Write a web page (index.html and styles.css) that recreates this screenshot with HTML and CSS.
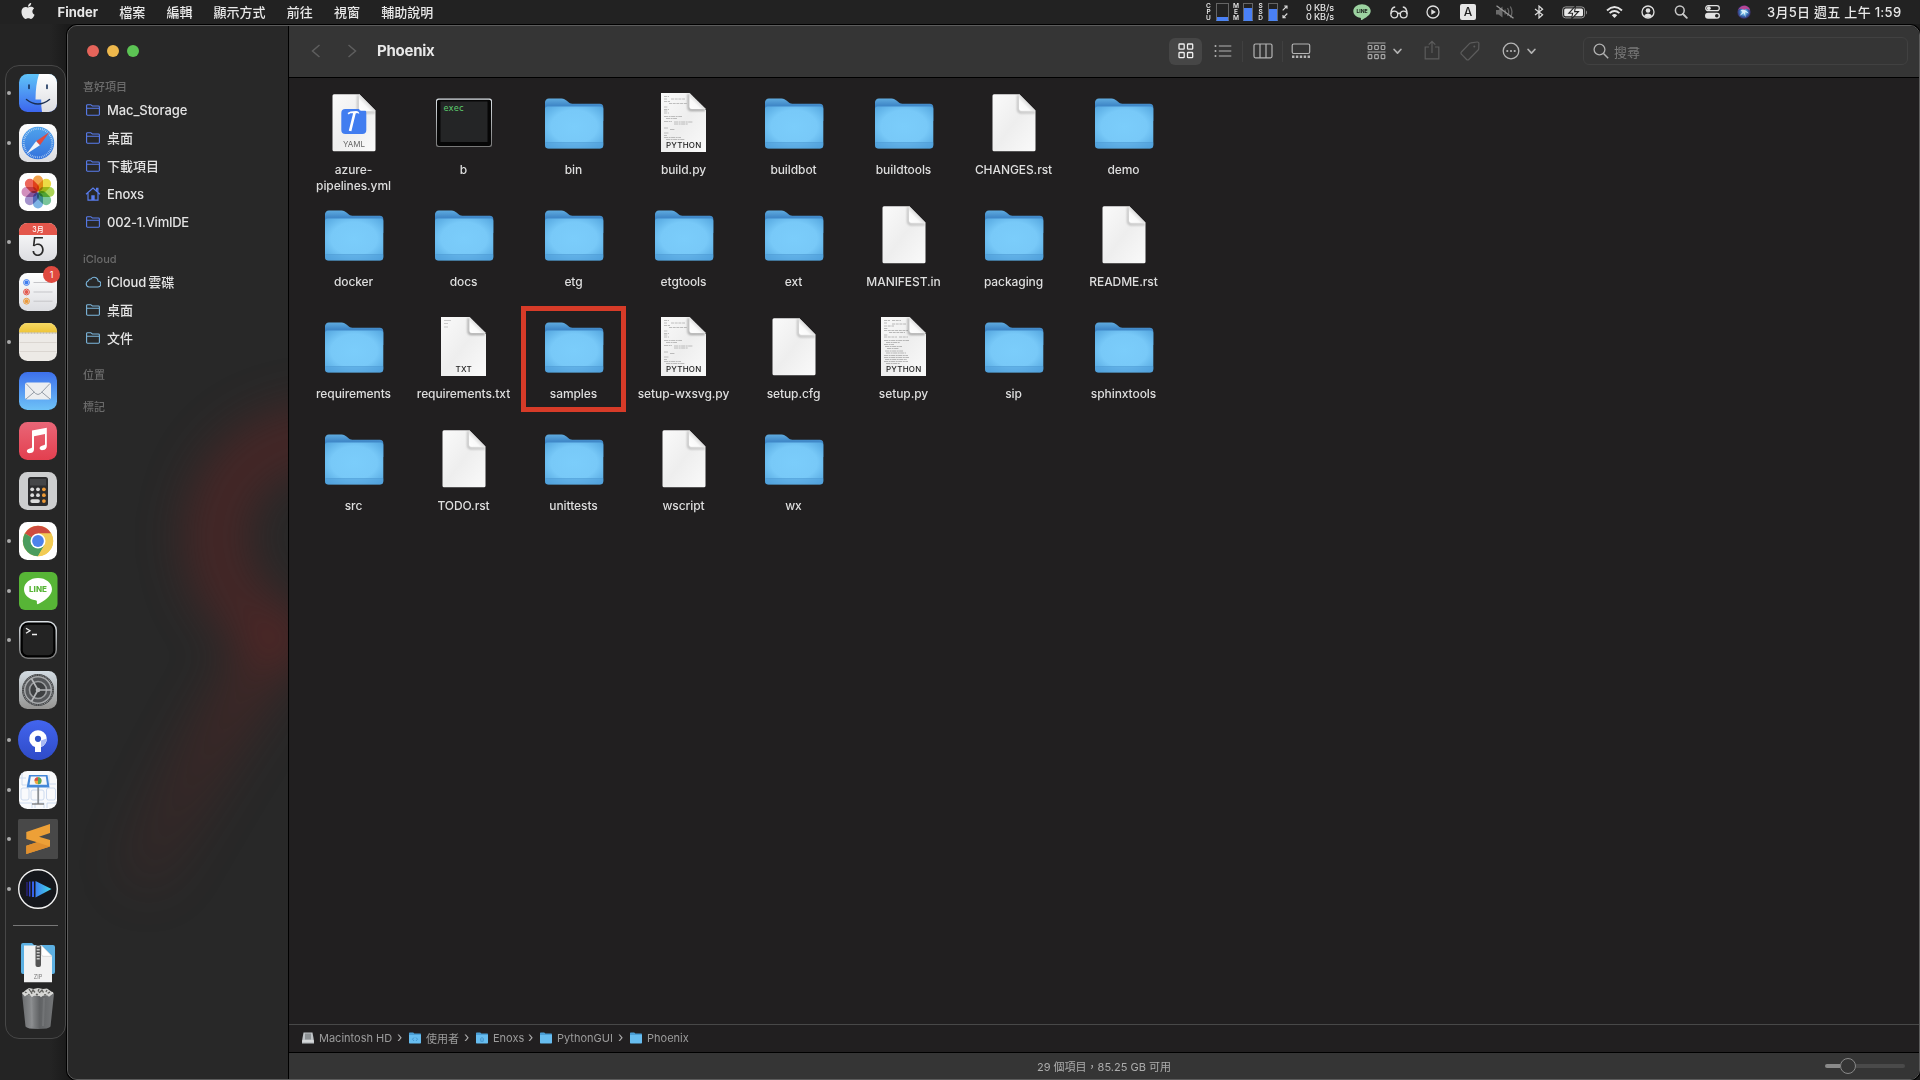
FILE: index.html
```html
<!DOCTYPE html>
<html lang="zh-Hant">
<head>
<meta charset="utf-8">
<title>Phoenix</title>
<link rel="stylesheet" href="styles.css">
</head>
<body>
<svg class="sprite" width="0" height="0" aria-hidden="true">
  <defs>
    <linearGradient id="gFolderBack" x1="0" y1="0" x2="0" y2="1"><stop offset="0" stop-color="#5fabdf"/><stop offset=".3" stop-color="#4088c8"/></linearGradient>
    <radialGradient id="gFolder" cx=".5" cy=".48" r=".72"><stop offset="0" stop-color="#7bcdfb"/><stop offset=".55" stop-color="#78c9f8"/><stop offset="1" stop-color="#50a2dc"/></radialGradient>
    <linearGradient id="gPage" x1="0" y1="0" x2="1" y2="1"><stop offset="0" stop-color="#fafafa"/><stop offset=".5" stop-color="#eeeeee"/><stop offset="1" stop-color="#fafafa"/></linearGradient>
    <linearGradient id="gCurl" x1="0" y1="1" x2=".55" y2=".45"><stop offset="0" stop-color="#fff"/><stop offset=".6" stop-color="#fafafa"/><stop offset="1" stop-color="#d4d4d4"/></linearGradient>
    <linearGradient id="gMetal" x1="0" y1="0" x2="0" y2="1"><stop offset="0" stop-color="#dde3e8"/><stop offset="1" stop-color="#777"/></linearGradient>
    <linearGradient id="gFinder" x1="0" y1="0" x2="0" y2="1"><stop offset="0" stop-color="#5fc4f8"/><stop offset="1" stop-color="#3c66ee"/></linearGradient>
    <linearGradient id="gWhite" x1="0" y1="0" x2="0" y2="1"><stop offset="0" stop-color="#fff"/><stop offset="1" stop-color="#dcdde1"/></linearGradient>
    <linearGradient id="gSafari" x1="0" y1="0" x2="0" y2="1"><stop offset="0" stop-color="#4fa3ec"/><stop offset="1" stop-color="#3573dc"/></linearGradient>
    <linearGradient id="gMail" x1="0" y1="0" x2="0" y2="1"><stop offset="0" stop-color="#3d70ec"/><stop offset="1" stop-color="#6ec2f7"/></linearGradient>
    <linearGradient id="gMusic" x1="0" y1="0" x2="0" y2="1"><stop offset="0" stop-color="#e96677"/><stop offset="1" stop-color="#e33f4f"/></linearGradient>
    <linearGradient id="gNote" x1="0" y1="0" x2="0" y2="1"><stop offset="0" stop-color="#f7da64"/><stop offset="1" stop-color="#eec437"/></linearGradient>
    <linearGradient id="gPlay" x1="0" y1="0" x2="1" y2="0"><stop offset="0" stop-color="#3d7ef0"/><stop offset="1" stop-color="#42dbe9"/></linearGradient>
    <linearGradient id="gSettings" x1="0" y1="0" x2="0" y2="1"><stop offset="0" stop-color="#d3dce3"/><stop offset="1" stop-color="#959492"/></linearGradient>
    <linearGradient id="gTrash" x1="0" y1="0" x2="1" y2="0"><stop offset="0" stop-color="#6a6c6e"/><stop offset=".3" stop-color="#898b8d"/><stop offset=".55" stop-color="#606264"/><stop offset="1" stop-color="#747678"/></linearGradient>
    <linearGradient id="gSource" x1="0" y1="0" x2="0" y2="1"><stop offset="0" stop-color="#4365ee"/><stop offset="1" stop-color="#2f4bc8"/></linearGradient>
    <radialGradient id="gSiri"><stop offset="0" stop-color="#bfe4f5"/><stop offset=".4" stop-color="#5fa8dc"/><stop offset=".7" stop-color="#3560a8"/><stop offset="1" stop-color="#3c2c62"/></radialGradient>
    <filter id="soft" x="-50%" y="-50%" width="200%" height="200%"><feGaussianBlur stdDeviation="1.2"/></filter>
  </defs>

  <symbol id="folder" viewBox="0 0 64 64">
    <path d="M3 12a4 4 0 0 1 4-4.500h12.500c2.500 0 3.800 1 5.300 2.300l1.500 1.300c1.200 1 2.200 1.700 4 1.700h27.500a3.500 3.500 0 0 1 3.500 3.500V30H3Z" fill="url(#gFolderBack)"/>
    <path d="M3 18a2.500 2.500 0 0 1 2.500-2.500h53.300a2.500 2.500 0 0 1 2.500 2.500v36a3.500 3.500 0 0 1-3.500 3.500H6.500A3.500 3.500 0 0 1 3 54Z" fill="url(#gFolder)"/>
    <path d="M3 51.500h58.300V54a3.500 3.500 0 0 1-3.500 3.500H6.500A3.500 3.500 0 0 1 3 54Z" fill="#4f9dd8" opacity=".55"/>
    <path d="M3.500 51.500h57.500" stroke="#4b97d0" stroke-width=".7" opacity=".7"/>
  </symbol>
  <symbol id="page" viewBox="0 0 64 64">
    <path d="M12 3.300h25.500l16 16.200v39.300a1.500 1.500 0 0 1-1.500 1.500H12a1.500 1.500 0 0 1-1.500-1.500v-54A1.500 1.500 0 0 1 12 3.300Z" fill="url(#gPage)"/>
    <path d="M36 4v14.500a3 3 0 0 0 3 3h14" fill="none" stroke="#777" stroke-width="1.500" opacity=".55" filter="url(#soft)"/>
    <path d="M37 3.300v14.200a2.300 2.300 0 0 0 2.300 2.300h14.200Z" fill="url(#gCurl)"/>
  </symbol>
  <symbol id="sheet" viewBox="0 0 64 64">
    <path d="M9 2h28.500L54 19v42H9Z" fill="url(#gPage)"/>
    <path d="M36.500 3v13.500a2.500 2.500 0 0 0 2.500 2.500h14" fill="none" stroke="#777" stroke-width="1.800" opacity=".7" filter="url(#soft)"/>
    <path d="M37.500 2v13.500a2.500 2.500 0 0 0 2.500 2.500h14Z" fill="url(#gCurl)"/>
  </symbol>
  <symbol id="python" viewBox="0 0 64 64">
    <use href="#sheet"/>
    <g stroke="#777" stroke-width=".8" opacity=".55" fill="none">
      <path d="M12 5.500h5M12 8h3M19 8h14M12 10.500h6M17 12.500h18M12 16h4M12 18.500h5M12 20h4M12 22h5" stroke-dasharray="3 .7"/>
      <path d="M12 25.500h18M14 27.500h11M12 30.500h8M22 31h19M22 33h14M12 37h4M18 38.500h5M12 42h5M12 44.500h3M12 46.500h17M14 48.500h19" stroke-dasharray="4 .6 2 .5"/>
    </g>
  </symbol>
  <symbol id="python-long" viewBox="0 0 64 64">
    <use href="#sheet"/>
    <g stroke="#777" stroke-width=".8" opacity=".6" fill="none">
      <path d="M12 5.500h6M20 5.500h9M12 8h3M20 9h14M12 11h10M12 13.500h4M12 15.500h24M17 17.500h16M12 20h4M12 22h13M27 22h9" stroke-dasharray="3 .7"/>
      <path d="M12 25.500h25M14 27.500h14M12 29.500h10M13 31.500h17M15 33.500h12M13 36h18M14 38h20M12 40.500h24M12 42.500h25M13 44.500h22M12 46.500h24M14 48.500h14" stroke-dasharray="4 .6 2 .5"/>
    </g>
  </symbol>

  <symbol id="side-folder" viewBox="0 0 16 14">
    <path d="M1.600 11.300V2.600a.9.900 0 0 1 .9-.9h3.300l1.500 1.300h6.200a.9.900 0 0 1 .9.900v7.400a.9.900 0 0 1-.9.900H2.500a.9.900 0 0 1-.9-.9ZM1.600 5.300h12.800" fill="none" stroke="currentColor" stroke-width="1.100"/>
  </symbol>
  <symbol id="side-home" viewBox="0 0 16 14">
    <path d="M1 7.300 8 1l7 6.300M3 6v7.200h10V6M11.600 3.500V1.300h1.300v3.500" fill="none" stroke="currentColor" stroke-width="1.200"/>
    <path d="M6.300 13V8.300h3.400V13Z" fill="currentColor"/>
  </symbol>
  <symbol id="side-cloud" viewBox="0 0 16 14">
    <path d="M4 12a3.200 3.200 0 0 1-.6-6.200A2.300 2.300 0 0 1 6 4a3.900 3.900 0 0 1 7.100 2A3 3 0 0 1 12.500 12Z" fill="none" stroke="currentColor" stroke-width="1.100"/>
  </symbol>
  <symbol id="mini-folder" viewBox="0 0 12 12">
    <path d="M0 1.500C0 .8.400.5 1 .5h3.200l1.200 1H11c.7 0 1 .3 1 1V5H0Z" fill="#4a9fd6"/>
    <path d="M0 3h12v7.500c0 .6-.4 1-1 1H1c-.6 0-1-.4-1-1Z" fill="#67bdf0"/>
  </symbol>
  <symbol id="chev-down" viewBox="0 0 8 6"><path d="M1 1.200 4 4.400l3-3.200" fill="none" stroke="currentColor" stroke-width="1.500" stroke-linecap="round" stroke-linejoin="round"/></symbol>
</svg>

<header class="menubar">
  <svg class="apple" viewBox="0 0 24 24"><path fill="#e6e6e6" d="M12.152 6.896c-.948 0-2.415-1.078-3.960-1.040-2.040.027-3.910 1.183-4.961 3.014-2.117 3.675-.546 9.103 1.519 12.090 1.013 1.454 2.208 3.090 3.792 3.039 1.520-.065 2.090-.987 3.935-.987 1.831 0 2.350.987 3.960.948 1.637-.026 2.676-1.480 3.676-2.948 1.156-1.688 1.636-3.325 1.662-3.415-.039-.013-3.182-1.221-3.220-4.857-.026-3.040 2.480-4.494 2.597-4.559-1.429-2.090-3.623-2.324-4.390-2.376-2-.156-3.675 1.090-4.610 1.090zM15.530 3.830c.843-1.012 1.400-2.427 1.245-3.830-1.207.052-2.662.805-3.532 1.818-.78.896-1.454 2.338-1.273 3.714 1.338.104 2.715-.688 3.559-1.701"/></svg>
  <nav class="menus">
    <span class="app-name">Finder</span><span>檔案</span><span>編輯</span><span>顯示方式</span><span>前往</span><span>視窗</span><span>輔助說明</span>
  </nav>
  <div class="status">
    <div class="meters">
      <span class="vert">C<br>P<br>U</span><span class="meter wide"><i class="lv-cpu"></i></span>
      <span class="vert">M<br>E<br>M</span><span class="meter"><i class="lv-mem"></i></span>
      <span class="vert">S<br>S<br>D</span><span class="meter"><i class="lv-ssd"></i></span>
      <svg class="updown" viewBox="0 0 6 14"><path d="M.7 5.300 5 1M2.200 1H5v2.800M5.300 8.500 1 12.800M1 10v2.800h2.800" fill="none" stroke="#ddd" stroke-width="1.100"/></svg>
    </div>
    <div class="net"><span>0 KB/s</span><span>0 KB/s</span></div>
    <svg class="si-line" viewBox="0 0 18 17"><path d="M9 .3C4.200.3.300 3.300.300 7.100c0 3.400 2.900 6.200 6.900 6.700.9.100.8.500.7 1.300-.1.900.2 1.200 1 .8 3.200-1.600 8.800-4.700 8.800-8.800C17.700 3.300 13.800.3 9 .3Z" fill="#9cd2a0"/><text x="9" y="9.200" class="line-sm">LINE</text></svg>
    <svg class="si-glass" viewBox="0 0 18 13"><g fill="none" stroke="#dcdcdc" stroke-width="1.300"><circle cx="4.300" cy="8.500" r="3.400"/><circle cx="13.700" cy="8.500" r="3.400"/><path d="M7.500 8c.7-1 2.300-1 3 0M1 8C1 4 2.500 1.200 5.200 1M17 8c0-4-1.500-6.800-4.200-7"/></g></svg>
    <svg class="si-play" viewBox="0 0 14 14"><circle cx="7" cy="7" r="6" fill="none" stroke="#e0e0e0" stroke-width="1.300"/><path d="M5.300 4.200v5.600L9.900 7Z" fill="#e0e0e0"/></svg>
    <span class="si-input">A</span>
    <svg class="si-mute" viewBox="0 0 20 14"><path d="M1 5h2.500L7.500 1.500v11L3.500 9.500H1Z" fill="#6b6b6b"/><path d="M9.800 4.500q1.500 2.500 0 5M12.500 3q2.500 4 0 8M15.300 1.500q3.300 5.500 0 11" fill="none" stroke="#666" stroke-width="1.300"/><path d="m1.500.8 17 12.400" stroke="#9a9a9a" stroke-width="1.300"/></svg>
    <svg class="si-bt" viewBox="0 0 10 14"><path d="m1 4 7.600 5.800L5 13V1l3.600 3.200L1 10" fill="none" stroke="#dedede" stroke-width="1.200"/></svg>
    <svg class="si-batt" viewBox="0 0 26 13"><rect x=".6" y=".9" width="22" height="11" rx="3" fill="none" stroke="#999" stroke-width="1"/><rect x="2.200" y="2.500" width="18.800" height="7.800" rx="1.500" fill="#e8e8e8"/><path d="M24 4.500c1.200.4 1.200 3.500 0 4Z" fill="#999"/><path d="M13.500 0 6.800 7.300h3.800L9.600 13l6.900-7.400h-3.900Z" fill="#e8e8e8" stroke="#222" stroke-width="1.100"/></svg>
    <svg class="si-wifi" viewBox="0 0 17 12"><g fill="none" stroke="#e4e4e4" stroke-width="1.900"><path d="M1 4.500q7.500-6.800 15 0M3.600 7.100q4.900-4.400 9.800 0"/></g><path d="M5.800 9.200q2.700-2.300 5.400 0L8.500 12Z" fill="#e4e4e4"/></svg>
    <svg class="si-user" viewBox="0 0 14 14"><circle cx="7" cy="7" r="6" fill="none" stroke="#e0e0e0" stroke-width="1.300"/><circle cx="7" cy="5.500" r="2.300" fill="#e0e0e0"/><path d="M3 11q1-2.600 4-2.600T11 11q-4 3-8 0Z" fill="#e0e0e0"/></svg>
    <svg class="si-find" viewBox="0 0 14 14"><circle cx="5.800" cy="5.500" r="4.400" fill="none" stroke="#c8c8c8" stroke-width="1.500"/><path d="m9 9 3.800 3.800" stroke="#c8c8c8" stroke-width="1.900" stroke-linecap="round"/></svg>
    <svg class="si-ctl" viewBox="0 0 15 14"><rect x=".7" y=".7" width="13.600" height="5" rx="2.500" fill="none" stroke="#e2e2e2" stroke-width="1.200"/><circle cx="3.800" cy="3.200" r="1.900" fill="#e2e2e2"/><rect y="7.700" width="15" height="6" rx="3" fill="#e2e2e2"/><circle cx="11.800" cy="10.700" r="1.800" fill="#222"/></svg>
    <svg class="si-siri" viewBox="0 0 14 14"><circle cx="7" cy="7" r="6.700" fill="url(#gSiri)"/><path d="M1 5Q4 0 8.500.8q4 1 4.500 4.700Q9.500 2.500 7 5 4 2.500 1 5Z" fill="#b84594"/><path d="M3.500 5.500Q7.500 3 12 8.500L8 7l.5 5.500L6.800 8 2.500 11 5.500 7Z" fill="#d9f0fa"/></svg>
    <span class="clock">3月5日 週五 上午 1:59</span>
  </div>
</header>

<div class="desktop">
  <aside class="dock">
    <div class="app running"><svg viewBox="0 0 40 40"><rect x="1" y="1" width="38" height="38" rx="8.500" fill="url(#gFinder)"/><path d="M21 1h9.500A8.500 8.500 0 0 1 39 9.500v21a8.500 8.500 0 0 1-8.500 8.500H24q-1-6-.8-12.500H17.500Q17.500 12 21 1Z" fill="url(#gWhite)"/><path d="M11 12v3.500M29 12v3.500" stroke="#15305a" stroke-width="1.600" stroke-linecap="round"/><path d="M8.500 26.500q11.500 9 23 0" fill="none" stroke="#1a2e50" stroke-width="1.500" stroke-linecap="round"/></svg></div>
    <div class="app running"><svg viewBox="0 0 40 40"><rect x="1" y="1" width="38" height="38" rx="8.500" fill="url(#gWhite)"/><circle cx="20" cy="20" r="16.200" fill="url(#gSafari)"/><circle cx="20" cy="20" r="14.300" fill="none" stroke="#cfe3f8" stroke-width="2" stroke-dasharray=".6 1.270"/><path d="m31.500 9-9.600 13.200-3.800-3.900Z" fill="#e04b3f"/><path d="M8.500 31 18.100 18.300l3.800 3.900Z" fill="#f2f4f7"/></svg></div>
    <div class="app"><svg viewBox="0 0 40 40"><rect x="1" y="1" width="38" height="38" rx="8.500" fill="#fff"/><g class="petals"><rect x="15" y="3.500" width="10" height="16" rx="5" fill="#f2a04a"/><rect x="15" y="3.500" width="10" height="16" rx="5" fill="#ecdb45" transform="rotate(45 20 20)"/><rect x="15" y="3.500" width="10" height="16" rx="5" fill="#aad356" transform="rotate(90 20 20)"/><rect x="15" y="3.500" width="10" height="16" rx="5" fill="#79c59a" transform="rotate(135 20 20)"/><rect x="15" y="3.500" width="10" height="16" rx="5" fill="#7db3e4" transform="rotate(180 20 20)"/><rect x="15" y="3.500" width="10" height="16" rx="5" fill="#a493cc" transform="rotate(225 20 20)"/><rect x="15" y="3.500" width="10" height="16" rx="5" fill="#d290bd" transform="rotate(270 20 20)"/><rect x="15" y="3.500" width="10" height="16" rx="5" fill="#ec665a" transform="rotate(315 20 20)"/></g></svg></div>
    <div class="app running"><svg viewBox="0 0 40 40"><rect x="1" y="1" width="38" height="38" rx="8.500" fill="url(#gWhite)"/><path d="M1 13V9.500A8.500 8.500 0 0 1 9.500 1h21A8.500 8.500 0 0 1 39 9.500V13Z" fill="#e3564b"/><text x="20" y="10" class="cal-month">3月</text><text x="20" y="33.500" class="cal-day">5</text></svg></div>
    <div class="app"><svg viewBox="0 0 40 40"><rect x="1" y="1" width="38" height="38" rx="8.500" fill="url(#gWhite)"/><path d="M15.500 10.500h19M15.500 20h19M15.500 29.200h19" stroke="#c5c5c9" stroke-width="1"/><g fill="none" stroke-width="1"><circle cx="8.500" cy="10.500" r="2.900" stroke="#3f7df0"/><circle cx="8.500" cy="20" r="2.900" stroke="#e3574d"/><circle cx="8.500" cy="29.200" r="2.900" stroke="#eb9a3c"/></g><circle cx="8.500" cy="10.500" r="1.900" fill="#3f7df0"/><circle cx="8.500" cy="20" r="1.900" fill="#e3574d"/><circle cx="8.500" cy="29.200" r="1.900" fill="#eb9a3c"/></svg><span class="badge">1</span></div>
    <div class="app running"><svg viewBox="0 0 40 40"><rect x="1" y="1" width="38" height="38" rx="8.500" fill="#edeae6"/><path d="M1 10.500v-1A8.500 8.500 0 0 1 9.500 1h21A8.500 8.500 0 0 1 39 9.500v1Z" fill="url(#gNote)"/><path d="M1 11h38" stroke="#aaa497" stroke-width="1" stroke-dasharray="1 .5"/><path d="M1.500 20.500h37M1.500 29.500h37" stroke="#d5d1cb" stroke-width=".8"/></svg></div>
    <div class="app"><svg viewBox="0 0 40 40"><rect x="1" y="1" width="38" height="38" rx="8.500" fill="url(#gMail)"/><rect x="7" y="11.500" width="26" height="17" rx="2.200" fill="#eceef0"/><path d="m8 12.500 9.500 10q2.500 2 5 0l9.500-10M8 28l8.300-7M32 28l-8.300-7" fill="none" stroke="#8b949f" stroke-width=".9"/></svg></div>
    <div class="app"><svg viewBox="0 0 40 40"><rect x="1" y="1" width="38" height="38" rx="8.500" fill="url(#gMusic)"/><path d="m14 9.500 14.800-2.800v18.200q0 3.600-3.800 4.200c-4 .6-4.500-3.300-1-4.300 2.600-.6 3-.7 3-2V13l-11 2.200v13q0 3.400-3.800 3.900c-4 .5-4.500-3.500-1-4.400 2.500-.6 2.800-.8 2.800-2Z" fill="#fff"/></svg></div>
    <div class="app"><svg viewBox="0 0 40 40"><rect x="1" y="1" width="38" height="38" rx="8.500" fill="#cdcecf"/><rect x="10" y="6" width="20" height="29" rx="2.500" fill="#2c2c2e"/><rect x="12" y="8" width="16" height="6.500" fill="#444547"/><g fill="#dcdcdc"><circle cx="14.200" cy="18.300" r="1.900"/><circle cx="20" cy="18.300" r="1.900"/><circle cx="14.200" cy="24.200" r="1.900"/><circle cx="20" cy="24.200" r="1.900"/><rect x="12.300" y="28.200" width="9.600" height="3.800" rx="1.900"/></g><g fill="#ee9a35"><circle cx="25.900" cy="18.300" r="1.900"/><circle cx="25.900" cy="24.200" r="1.900"/><circle cx="25.900" cy="30.100" r="1.900"/></g></svg></div>
    <div class="app running"><svg viewBox="0 0 40 40"><rect x="1" y="1" width="38" height="38" rx="8.500" fill="#fff"/><circle cx="20" cy="20" r="15.200" fill="#f2cb54"/><path d="M20 20 6.840 12.400A15.200 15.200 0 0 1 33.160 12.400H20Z" fill="#ce4c3f"/><path d="M6.840 12.400A15.200 15.200 0 0 0 20 35.200L26.600 23.800 20 20Z" fill="#4a9c5e"/><path d="M20 12.400h13.160A15.200 15.200 0 0 1 20 35.200L26.600 23.800Z" fill="#f2cb54"/><circle cx="20" cy="20" r="7.500" fill="#fff"/><circle cx="20" cy="20" r="5.900" fill="#4d82ea"/></svg></div>
    <div class="app running"><svg viewBox="0 0 40 40"><rect x="1" y="1" width="38.500" height="38" rx="6" fill="#57b536"/><path d="M20 7C12.200 7 6 11.900 6 18.200c0 5.700 4.700 10 11.500 11.100 1.200.2 1.500.8 1.400 1.800-.2 1.900.2 2.600 1.800 1.700C25.300 30.200 34 25 34 18.200 34 11.900 27.800 7 20 7Z" fill="#fff"/><text x="20" y="21.300" class="line-lg">LINE</text></svg></div>
    <div class="app running"><svg viewBox="0 0 40 40"><rect x="1" y="1" width="38" height="38" rx="9" fill="url(#gMetal)"/><rect x="2.500" y="2.500" width="35" height="35" rx="7.500" fill="#000"/><rect x="4.800" y="4.800" width="30.400" height="30.400" rx="5" fill="#232323"/><path d="m8 8.300 4 2.500-4 2.500M14 14.500h5" fill="none" stroke="#f0f0f0" stroke-width="1.300"/></svg></div>
    <div class="app"><svg viewBox="0 0 40 40"><rect x="1" y="1" width="38" height="38" rx="8.500" fill="url(#gSettings)"/><circle cx="20" cy="20" r="16" fill="#3b3d3f"/><circle cx="20" cy="20" r="13.300" fill="#55575a" stroke="#a6a8aa" stroke-width="1.500"/><circle cx="20" cy="20" r="15" fill="none" stroke="#8b8d90" stroke-width="1.200" stroke-dasharray="1 .8"/><circle cx="20" cy="20" r="8.500" fill="#3e4042" stroke="#9c9ea0" stroke-width="1.600"/><path d="M20 20h13M20 20 13.500 8.700M20 20l-6.500 11.300" stroke="#b5b7b9" stroke-width="1.700"/><circle cx="20" cy="20" r="2.300" fill="#b5b7b9"/></svg></div>
    <div class="app running"><svg viewBox="0 0 40 40"><circle cx="20" cy="20" r="20" fill="url(#gSource)"/><path d="M20 10.300a8.600 8.600 0 0 0-3 16.700V32h6v-5a8.600 8.600 0 0 0-3-16.700Z" fill="#fff"/><path d="M23 20.500V27q5.500-2.500 5.600-8.500Z" fill="#a9b9f4"/><circle cx="20" cy="18.800" r="3.100" fill="#2f52c8"/></svg></div>
    <div class="app running"><svg viewBox="0 0 40 40"><rect x="1" y="1" width="38" height="38" rx="8.500" fill="#f9fafc"/><g fill="none" stroke="#c3d3ec" stroke-width=".8"><rect x="3" y="18" width="8" height="12" rx="2"/><rect x="13" y="20" width="13" height="10" rx="2"/><rect x="28.500" y="18" width="9" height="12" rx="2"/><path d="M2 33h12v5M17 38v-5h9v5M38 33h-9v5M2 8h6M31 5v9h7M4 3v12h5"/></g><path d="M19.300 17h1.800v17h-1.800Z" fill="#8d9196"/><path d="M14 34h12" stroke="#777" stroke-width="1.300"/><path d="M11 5h18.500l2 12.500H8.700Z" fill="#4487d8"/><path d="M12.800 6.500h15L29 14.700H11.500Z" fill="#f4f6fa"/><circle cx="20" cy="10.700" r="3.500" fill="#efab3f"/><path d="M20 10.700V7.200a3.500 3.500 0 0 1 0 7Z" fill="#51a95c"/><path d="M20 10.700h-3.500A3.500 3.500 0 0 1 20 7.200Z" fill="#d94b46"/></svg></div>
    <div class="app running"><svg viewBox="0 0 40 40"><rect width="40" height="40" rx="1.500" fill="#484848"/><path d="M8.300 13 32 5v9l-11 3.700L32 21v6.500L8.300 35v-8.300L19 23.200 8.300 20Z" fill="#eda037"/><path d="M8.300 26.700 19 23.200l13 4.300L8.300 35Z" fill="#e08f2e"/></svg></div>
    <div class="app running"><svg viewBox="0 0 40 40"><circle cx="20" cy="20" r="19.300" fill="#15171c" stroke="#f2f2f2" stroke-width="1.400"/><path d="M17.500 12v16.500L33.500 20Z" fill="url(#gPlay)"/><path d="M15 12.500v15.500" stroke="#3560ea" stroke-width="2"/><path d="M11.700 12.500v15" stroke="#3344c8" stroke-width="1.500"/><path d="M9 13v14" stroke="#2d2690" stroke-width="1.200"/></svg></div>
    <hr>
    <svg class="stack" viewBox="0 0 40 42"><path d="M3 4q0-2 2-2h9l2 2h19q2 0 2 2v25q0 2-2 2H5q-2 0-2-2Z" fill="#5cb0e2"/><path d="M6 4.500h17.500L34 15v26.300H6Z" fill="#f2f2f2"/><path d="M23.500 4.500v9q0 1.800 2 1.800H34Z" fill="#fff" stroke="#c4c4c4" stroke-width=".6"/><rect x="17.500" y="4" width="5.500" height="22" rx="2" fill="#555"/><path d="M20.200 5v14" stroke="#ccc" stroke-width="3" stroke-dasharray="1.500 1.500"/><text x="20" y="38.300" class="zip">ZIP</text></svg>
    <svg class="trash" viewBox="0 0 40 44"><path d="M4.500 7Q8 3.500 11 2l4.500 1L20 2l5 1 4-.5 6.500 4.500-3 5H8Z" fill="#d5d5d3"/><path d="m7 6 5 3 3-5 4 5 5-5 3 5 5-3M11 3l3 5M21 3l-2 5M29 4l-3 5" stroke="#62625f" stroke-width="1.300" fill="none"/><path d="M4 7.500q16 5 32 0l-3.500 33Q31 43 20 43T7.500 40.500Z" fill="url(#gTrash)"/><path d="M4.500 6.500 7 9.300l4-3 3 3.700 5-4 4 4 4-3.500 4 3 4-3" fill="none" stroke="#d8d8d6" stroke-width="1.800"/><path d="M13 12l1.500 28M26 12l-1 28" stroke="#999b9d" stroke-width="2" opacity=".25"/></svg>
  </aside>

  <main class="window">
    <aside class="sidebar">
      <svg class="glow" viewBox="0 0 220 1054"><defs><filter id="haze" filterUnits="userSpaceOnUse" x="-150" y="250" width="600" height="800" color-interpolation-filters="sRGB"><feGaussianBlur stdDeviation="23"/></filter><linearGradient id="gTail" gradientUnits="userSpaceOnUse" x1="0" y1="600" x2="0" y2="880"><stop offset="0" stop-color="#6a2624" stop-opacity=".4"/><stop offset="1" stop-color="#6a2624" stop-opacity=".08"/></linearGradient></defs><g filter="url(#haze)" fill="none" stroke-linecap="round"><path d="M270 408Q155 410 147 510Q150 580 215 608" stroke="#6a2624" stroke-opacity=".46" stroke-width="60"/><path d="M205 625Q150 700 80 840" stroke="url(#gTail)" stroke-width="56"/></g></svg>
      <div class="lights"><i class="red"></i><i class="yellow"></i><i class="green"></i></div>
      <h2>喜好項目</h2>
      <ul>
        <li><svg><use href="#side-folder"/></svg><span class="latin">Mac_Storage</span></li>
        <li><svg><use href="#side-folder"/></svg>桌面</li>
        <li><svg><use href="#side-folder"/></svg>下載項目</li>
        <li><svg><use href="#side-home"/></svg><span class="latin">Enoxs</span></li>
        <li><svg><use href="#side-folder"/></svg><span class="latin tight">002-1.VimIDE</span></li>
      </ul>
      <h2 class="h-cloud">iCloud</h2>
      <ul class="cloud">
        <li><svg><use href="#side-cloud"/></svg><span class="latin">iCloud</span><span class="hair">雲碟</span></li>
        <li><svg><use href="#side-folder"/></svg>桌面</li>
        <li><svg><use href="#side-folder"/></svg>文件</li>
      </ul>
      <h2 class="h-place">位置</h2>
      <h2 class="h-tags">標記</h2>
    </aside>

    <section class="pane">
      <div class="toolbar">
        <svg class="nav-arrow" viewBox="0 0 10 14"><path d="M8.500 1 1.500 7l7 6" fill="none" stroke="#5e5e5e" stroke-width="1.500"/></svg>
        <svg class="nav-arrow" viewBox="0 0 10 14"><path d="m1.500 1 7 6-7 6" fill="none" stroke="#5e5e5e" stroke-width="1.500"/></svg>
        <h1>Phoenix</h1>
        <div class="views">
          <span class="view active"><svg width="16" height="16" viewBox="0 0 16 16"><g fill="none" stroke="#f0f0f0" stroke-width="1.300"><rect x="1" y="1" width="5.200" height="5.200" rx=".8"/><rect x="9.500" y="1" width="5.200" height="5.200" rx=".8"/><rect x="1" y="9.500" width="5.200" height="5.200" rx=".8"/><rect x="9.500" y="9.500" width="5.200" height="5.200" rx=".8"/></g></svg></span>
          <span class="view"><svg width="18" height="14" viewBox="0 0 18 14"><path d="M4.800 2h12.500M4.800 7h12.500M4.800 12h12.500" stroke="#b4b4b4" stroke-width="1.200"/><g fill="#b4b4b4"><circle cx="1.500" cy="2" r="1"/><circle cx="1.500" cy="7" r="1"/><circle cx="1.500" cy="12" r="1"/></g></svg></span>
          <span class="view split"><svg width="20" height="16" viewBox="0 0 20 16"><g fill="none" stroke="#b4b4b4" stroke-width="1.200"><rect x="1" y="1" width="18" height="13.800" rx="1.500"/><path d="M7 1v14M13 1v14"/></g></svg></span>
          <span class="view split last"><svg width="20" height="16" viewBox="0 0 20 16"><rect x="1.200" y="1" width="17.500" height="9.500" rx="1.500" fill="none" stroke="#b4b4b4" stroke-width="1.200"/><path d="M1 13.800h18" stroke="#b4b4b4" stroke-width="2.400" stroke-dasharray="2.400 1.500"/></svg></span>
        </div>
        <svg class="group" viewBox="0 0 19 18"><g fill="none" stroke="#a8a8a8" stroke-width="1.200"><path d="M.5 1h18M.5 10h18"/><rect x="1.200" y="3.500" width="3.600" height="4" rx=".8"/><rect x="7.700" y="3.500" width="3.600" height="4" rx=".8"/><rect x="14.200" y="3.500" width="3.600" height="4" rx=".8"/><rect x="1.200" y="12.700" width="3.600" height="4" rx=".8"/><rect x="7.700" y="12.700" width="3.600" height="4" rx=".8"/><rect x="14.200" y="12.700" width="3.600" height="4" rx=".8"/></g></svg>
        <svg class="chev"><use href="#chev-down"/></svg>
        <svg class="share" viewBox="0 0 16 20"><path d="M5 7H1.200v11.800h13.600V7H11M8 13V1.500M4.700 4.600 8 1.300l3.300 3.300" fill="none" stroke="#5c5c5c" stroke-width="1.200"/></svg>
        <svg class="tag" viewBox="0 0 20 20"><path d="M11 1.800 17.200 1a1.500 1.500 0 0 1 1.700 1.500l-.2 5.200a2 2 0 0 1-.6 1.300L8.800 18.500a1.500 1.500 0 0 1-2.200 0l-5.200-5.300a1.500 1.500 0 0 1 0-2.200L9.700 2.400A2 2 0 0 1 11 1.800Z" fill="none" stroke="#5c5c5c" stroke-width="1.200"/><circle cx="14.300" cy="5.500" r="1" fill="#5c5c5c"/></svg>
        <svg class="more" viewBox="0 0 18 18"><circle cx="9" cy="9" r="7.800" fill="none" stroke="#b4b4b4" stroke-width="1.300"/><g fill="#b4b4b4"><circle cx="5.300" cy="9" r="1.100"/><circle cx="9" cy="9" r="1.100"/><circle cx="12.700" cy="9" r="1.100"/></g></svg>
        <svg class="chev"><use href="#chev-down"/></svg>
        <div class="search"><svg viewBox="0 0 16 16"><circle cx="6.500" cy="6.500" r="5.400" fill="none" stroke="#b0b0b0" stroke-width="1.300"/><path d="m10.500 10.500 4.700 4.700" stroke="#b0b0b0" stroke-width="1.500"/></svg>搜尋</div>
      </div>

      <div class="files">
        <figure><svg viewBox="0 0 64 64"><use href="#page"/><rect x="19.300" y="18" width="25" height="25" rx="4" fill="#417df0"/><path d="m25.500 22 3-1.500 5.500-.5q3 .2 3.300 2.700l-2.300-.6-1.300.4-4.300 17.800-2.600-.5 4.300-17.600-2.800.1-1.600 1.200Z" fill="#fff"/><path d="M37 3.300v14.200a2.300 2.300 0 0 0 2.300 2.300h14.200Z" fill="url(#gCurl)"/><text x="32" y="56" class="type-tag">YAML</text></svg><figcaption>azure-<br>pipelines.yml</figcaption></figure>
        <figure><svg viewBox="0 0 64 64"><rect x="4" y="7.500" width="56" height="48.500" rx="2.500" fill="url(#gMetal)"/><rect x="5" y="8.700" width="54" height="46.200" rx="1.800" fill="#060606"/><rect x="8.500" y="10.500" width="47" height="40.500" fill="#242526"/><text x="11.500" y="20" class="exec">exec</text></svg><figcaption>b</figcaption></figure>
        <figure><svg><use href="#folder"/></svg><figcaption>bin</figcaption></figure>
        <figure><svg viewBox="0 0 64 64"><use href="#python"/><text x="31.700" y="56.500" class="type-tag type-tag-dark">PYTHON</text></svg><figcaption>build.py</figcaption></figure>
        <figure><svg><use href="#folder"/></svg><figcaption>buildbot</figcaption></figure>
        <figure><svg><use href="#folder"/></svg><figcaption>buildtools</figcaption></figure>
        <figure><svg><use href="#page"/></svg><figcaption>CHANGES.rst</figcaption></figure>
        <figure><svg><use href="#folder"/></svg><figcaption>demo</figcaption></figure>

        <figure><svg><use href="#folder"/></svg><figcaption>docker</figcaption></figure>
        <figure><svg><use href="#folder"/></svg><figcaption>docs</figcaption></figure>
        <figure><svg><use href="#folder"/></svg><figcaption>etg</figcaption></figure>
        <figure><svg><use href="#folder"/></svg><figcaption>etgtools</figcaption></figure>
        <figure><svg><use href="#folder"/></svg><figcaption>ext</figcaption></figure>
        <figure><svg><use href="#page"/></svg><figcaption>MANIFEST.in</figcaption></figure>
        <figure><svg><use href="#folder"/></svg><figcaption>packaging</figcaption></figure>
        <figure><svg><use href="#page"/></svg><figcaption>README.rst</figcaption></figure>

        <figure><svg><use href="#folder"/></svg><figcaption>requirements</figcaption></figure>
        <figure><svg viewBox="0 0 64 64"><use href="#sheet"/><path d="M12 5.500h7M12 8.500h4M12 12h4" stroke="#aaa" stroke-width=".6"/><text x="31.700" y="56.500" class="type-tag type-tag-dark">TXT</text></svg><figcaption>requirements.txt</figcaption></figure>
        <figure class="marked"><svg><use href="#folder"/></svg><figcaption>samples</figcaption></figure>
        <figure><svg viewBox="0 0 64 64"><use href="#python"/><text x="31.700" y="56.500" class="type-tag type-tag-dark">PYTHON</text></svg><figcaption>setup-wxsvg.py</figcaption></figure>
        <figure><svg><use href="#page"/></svg><figcaption>setup.cfg</figcaption></figure>
        <figure><svg viewBox="0 0 64 64"><use href="#python-long"/><text x="31.700" y="56.500" class="type-tag type-tag-dark">PYTHON</text></svg><figcaption>setup.py</figcaption></figure>
        <figure><svg><use href="#folder"/></svg><figcaption>sip</figcaption></figure>
        <figure><svg><use href="#folder"/></svg><figcaption>sphinxtools</figcaption></figure>

        <figure><svg><use href="#folder"/></svg><figcaption>src</figcaption></figure>
        <figure><svg><use href="#page"/></svg><figcaption>TODO.rst</figcaption></figure>
        <figure><svg><use href="#folder"/></svg><figcaption>unittests</figcaption></figure>
        <figure><svg><use href="#page"/></svg><figcaption>wscript</figcaption></figure>
        <figure><svg><use href="#folder"/></svg><figcaption>wx</figcaption></figure>
      </div>

      <div class="pathbar">
        <span class="crumb"><svg viewBox="0 0 12 12"><path d="M1.500.5h9L12 9v2.500H0V9Z" fill="#bfc3c6"/><path d="M3 1.500h6v6H3Z" fill="#8d9194"/><path d="M.3 9h11.400" stroke="#eee" stroke-width="1"/></svg><span class="w-hd">Macintosh HD</span></span>
        <span class="crumb"><svg viewBox="0 0 12 12"><use href="#mini-folder"/><path d="M5 5.500 3.500 7.200 5 9M7 5.500l1.500 1.700L7 9" fill="none" stroke="#3d8ec8" stroke-width=".8"/></svg><span class="w-users">使用者</span></span>
        <span class="crumb"><svg viewBox="0 0 12 12"><use href="#mini-folder"/><path d="m4 7.300 2-1.800 2 1.800M4.800 7v2.300h2.400V7" fill="none" stroke="#3d8ec8" stroke-width=".8"/></svg><span class="w-home">Enoxs</span></span>
        <span class="crumb"><svg><use href="#mini-folder"/></svg><span class="w-gui">PythonGUI</span></span>
        <span class="crumb"><svg><use href="#mini-folder"/></svg><span>Phoenix</span></span>
      </div>
      <div class="statusbar">
        <span class="count">29 個項目，85.25 GB 可用</span>
        <span class="slider"><i class="fill"></i><i class="knob"></i><i class="rest"></i></span>
      </div>
    </section>
  </main>
</div>
</body>
</html>
```
FILE: styles.css
```css
*, *::before, *::after { box-sizing: border-box; }
html, body { height: 100%; }
body {
  margin: 0;
  width: 1920px;
  height: 1080px;
  overflow: hidden;
  display: flex;
  flex-direction: column;
  background: #232323;
  color: #e3e3e3;
  font-family: Inter, "Noto Sans CJK TC", sans-serif;
  font-size: 13px;
}
svg { display: block; flex: none; }
.sprite { position: absolute; }

/* menu bar */
.menubar {
  flex: none;
  height: 24px;
  display: flex;
  align-items: center;
  background: #222;
  font-weight: 500;
  color: #e8e8e8;
  line-height: 24px;
  white-space: nowrap;
}
.apple { width: 16px; height: 16px; margin: 0 0 2px 20px; }
.menus { display: flex; gap: 21.200px; margin-left: 21.500px; }
.app-name { font-weight: 700; width: 40.500px; }
.status { display: flex; align-items: center; margin-left: auto; padding-right: 15px; }
.meters { display: flex; align-items: center; height: 24px; }
.vert { width: 7px; font-size: 6.500px; line-height: 6px; text-align: center; font-weight: 600; margin-right: 3.500px; }
.meter { width: 10px; height: 18px; margin-right: 4px; border: 1px solid #666; border-bottom-color: #4d86f0; display: flex; align-items: flex-end; }
.meter.wide { width: 13px; }
.meter i { width: 100%; background: #4a80f5; }
.lv-cpu { height: 3px; }
.lv-mem { height: 12px; }
.lv-ssd { height: 11px; }
.updown { width: 6px; height: 14px; }
.net { display: flex; flex-direction: column; margin-left: 18.500px; width: 30px; font-size: 9px; line-height: 9px; letter-spacing: -.1px; }
.si-line { width: 18px; height: 17px; margin-left: 17px; }
.line-sm { font: 800 5px Inter, sans-serif; text-anchor: middle; fill: #1f2a20; }
.si-glass { width: 18px; height: 13px; margin-left: 19px; }
.si-play { width: 14px; height: 14px; margin-left: 18px; }
.si-input { width: 16px; height: 16px; margin-left: 20px; border-radius: 2px; background: #e6e6e6; color: #222; line-height: 16px; text-align: center; font-size: 12px; }
.si-mute { width: 20px; height: 14px; margin-left: 19px; }
.si-bt { width: 10px; height: 14px; margin-left: 19px; }
.si-batt { width: 26px; height: 13px; margin-left: 18px; }
.si-wifi { width: 17px; height: 12px; margin-left: 18px; }
.si-user { width: 14px; height: 14px; margin-left: 18px; }
.si-find { width: 14px; height: 14px; margin-left: 19px; }
.si-ctl { width: 15px; height: 14px; margin-left: 17px; }
.si-siri { width: 14px; height: 14px; margin-left: 17px; }
.clock { width: 138px; margin-left: 16px; letter-spacing: .28px; }

/* desktop */
.desktop { flex: 1; display: flex; min-height: 0; background: linear-gradient(90deg, #242424 50px, #1b1b1b 67px); }

/* dock */
.dock {
  flex: none;
  width: 61px;
  height: 974px;
  margin: 41px 1px 0 5px;
  padding-top: 2px;
  border: 1px solid #474747;
  border-radius: 14px;
  background: #262626;
}
.app { position: relative; display: flex; align-items: center; height: 49.770px; padding-left: 12px; }
.app > svg { width: 40px; height: 40px; }
.running { padding-left: 1px; }
.running::before { content: ""; width: 4px; height: 4px; margin-right: 7px; border-radius: 50%; background: #aaa; }
.petals rect { mix-blend-mode: multiply; }
.badge { position: absolute; left: 37px; top: -1px; width: 17px; height: 17px; border-radius: 50%; background: #e0493f; color: #fff; font-size: 9px; line-height: 17px; text-align: center; }
.dock hr { width: 45px; height: 1px; margin: 11px 0 15px 7px; border: 0; background: #777; }
.stack { width: 40px; height: 42px; margin: 0 0 3px 12px; }
.trash { width: 40px; height: 44px; margin-left: 12px; }
.cal-month { font: 500 7px Inter, "Noto Sans CJK TC", sans-serif; text-anchor: middle; fill: #fff; }
.cal-day { font: 300 25px Inter, sans-serif; text-anchor: middle; fill: #2a2a2a; }
.line-lg { font: 800 8px Inter, sans-serif; text-anchor: middle; fill: #57b536; }
.zip { font: 400 5.500px Inter, sans-serif; text-anchor: middle; fill: #777; }

/* window */
.window {
  flex: 1;
  min-width: 0;
  height: 1055px;
  margin-top: 1px;
  display: flex;
  border: 1px solid #5c5c5c;
  border-radius: 10px;
  overflow: hidden;
  background: #353535;
  box-shadow: 0 0 0 1px #000;
}
.sidebar { position: relative; flex: none; width: 221px; padding-left: 15px; background: #282828; border-right: 1px solid #000; overflow: hidden; }
.glow { position: absolute; left: 0; top: 0; width: 220px; height: 1054px; }
.sidebar > :not(.glow) { position: relative; }
.lights { display: flex; gap: 8px; margin: 19px 0 0 4px; }
.lights i { width: 12px; height: 12px; border-radius: 50%; }
.red { background: #e5645a; }
.yellow { background: #eeb84c; }
.green { background: #5cc454; }
.sidebar h2 { margin: 22px 0 0; height: 16px; font-size: 11px; line-height: 16px; font-weight: 500; color: #6b6b6b; }
.sidebar ul { list-style: none; margin: 1px 0 0; padding: 0; font-weight: 500; color: #e4e4e4; }
.sidebar li { display: flex; align-items: center; height: 28px; line-height: 28px; }
.sidebar li svg { width: 16px; height: 14px; margin: 0 6px 0 2px; color: #587ced; }
.sidebar .cloud li svg { color: #7cb6dc; }
.latin { letter-spacing: -.1px; }
.tight { letter-spacing: -.25px; }
.hair { margin-left: 2px; }
.sidebar .h-cloud { margin-top: 15px; }
.sidebar .h-place { margin-top: 15px; }
.sidebar .h-tags { margin-top: 16px; }

.pane { flex: 1; min-width: 0; display: flex; flex-direction: column; background: #211f20; }
.toolbar { flex: none; height: 52px; display: flex; align-items: center; padding: 0 0 1px 22px; background: #353535; border-bottom: 1px solid #000; }
.nav-arrow { width: 10px; height: 14px; }
.nav-arrow + .nav-arrow { margin-left: 26px; }
.toolbar h1 { width: 60px; margin: 0 0 1px 20px; font-size: 15px; font-weight: 700; letter-spacing: -.25px; color: #e8e8e8; }
.views { display: flex; align-items: center; margin-left: 732px; }
.view { display: flex; align-items: center; justify-content: center; width: 39px; height: 27px; }
.view.active { width: 33px; background: #464646; border-radius: 6px; margin-right: 1px; }
.view.split { width: 40px; height: 21px; border-left: 1px solid #404040; }
.view.last { width: 36px; }
.group { width: 19px; height: 18px; margin-left: 49px; }
.chev { width: 9px; height: 7px; margin-left: 7px; color: #b0b0b0; }
.share { width: 16px; height: 20px; margin: 0 0 3px 22px; }
.tag { width: 20px; height: 20px; margin-left: 20px; }
.more { width: 18px; height: 18px; margin-left: 22px; }
.search { width: 325px; height: 28px; margin-left: auto; margin-right: 11px; display: flex; align-items: center; padding-left: 9px; border: 1px solid #414141; border-radius: 6px; color: #7a7a7a; }
.search svg { width: 16px; height: 16px; margin-right: 5px; }

.files {
  flex: 1;
  display: grid;
  grid-template-columns: repeat(8, 110px);
  grid-auto-rows: 112px;
  align-content: start;
  padding: 13px 0 0 10px;
}
.files figure { position: relative; margin: 0; display: flex; flex-direction: column; align-items: center; gap: 7px; }
.files figure svg { width: 64px; height: 64px; }
figcaption { padding-right: 1px; font-size: 12px; line-height: 16px; font-weight: 500; letter-spacing: -.08px; text-align: center; white-space: nowrap; color: #dedede; }
.marked::after { content: ""; position: absolute; left: 2px; top: -9px; width: 105px; height: 106px; border: 5px solid #d73b28; }
.type-tag { font: 400 8px Inter, sans-serif; text-anchor: middle; fill: #666; }
.type-tag-dark { font-weight: 500; letter-spacing: .2px; fill: #222; }
.exec { font: 8.500px "DejaVu Sans Mono", monospace; fill: #5fd070; }

.pathbar { flex: none; height: 29px; display: flex; align-items: center; padding: 0 0 1px 13px; border-top: 1px solid #484848; border-bottom: 1px solid #000; font-size: 11px; color: #9c9c9c; }
.crumb { display: flex; align-items: center; white-space: nowrap; }
.crumb svg { width: 12px; height: 12px; margin-right: 5px; }
.crumb:not(:last-child)::after { content: "›"; width: 11px; margin-left: 5px; margin-right: 1px; font-size: 14px; line-height: 14px; margin-top: -2px; color: #aaa; }
.w-hd { width: 73px; }
.w-users { width: 33px; }
.w-home { width: 30px; }
.w-gui { width: 56px; }
.statusbar { flex: none; height: 26px; display: flex; align-items: center; padding-bottom: 1px; background: #353535; font-size: 11px; color: #adadad; }
.count { width: 140px; margin-left: 748px; white-space: nowrap; }
.slider { display: flex; align-items: center; width: 80px; margin-left: auto; margin-right: 14px; }
.fill { width: 15px; height: 4px; border-radius: 2px 0 0 2px; background: #8a8a8a; }
.knob { width: 16px; height: 16px; border: 1px solid #8a8a8a; border-radius: 50%; background: #353535; }
.rest { flex: 1; height: 4px; border-radius: 0 2px 2px 0; background: #4a4a4a; }
```
